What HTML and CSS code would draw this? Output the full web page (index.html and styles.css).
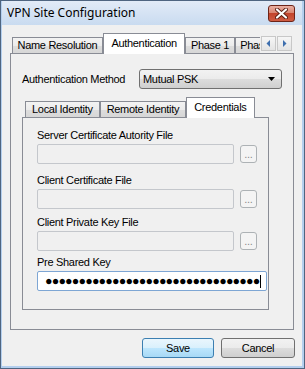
FILE: index.html
```html
<!DOCTYPE html>
<html lang="en">
<head>
  <meta charset="UTF-8" />
  <meta name="viewport" content="width=device-width, initial-scale=1.0" />
  <title>VPN Site Configuration</title>
  <link rel="stylesheet" href="styles.css">
</head>
<body>
  <div class="window">
    <!-- Title bar -->
    <div class="titlebar">
      <span class="title">VPN Site Configuration</span>
      <button class="close-btn" title="Close">
        <svg width="13" height="11" viewBox="0 0 13 11">
          <path d="M2 1.5 L11 9.5 M11 1.5 L2 9.5" stroke="#5a1d12" stroke-width="4" stroke-linecap="round" />
          <path d="M2 1.5 L11 9.5 M11 1.5 L2 9.5" stroke="#fff" stroke-width="2.2" stroke-linecap="round" />
        </svg>
      </button>
    </div>

    <div class="client">
      <!-- Outer tab control -->
      <div class="tabs outer">
        <div class="tab-strip">
          <div class="tab-list">
            <div class="tab">Name Resolution</div>
            <div class="tab active">Authentication</div>
            <div class="tab">Phase 1</div>
            <div class="tab">Phase 2</div>
          </div>
          <div class="tab-scroll">
            <span class="scroll-btn">
              <svg width="5" height="7" viewBox="0 0 5 7"><path d="M4 0 L4 7 L0.5 3.5 Z" fill="#3e6fae" /></svg>
            </span>
            <span class="scroll-btn">
              <svg width="5" height="7" viewBox="0 0 5 7"><path d="M1 0 L1 7 L4.5 3.5 Z" fill="#3e6fae" /></svg>
            </span>
          </div>
        </div>

        <div class="tab-page main-page">
          <div class="method-row">
            <label class="method-label">Authentication Method</label>
            <div class="combo">
              <span>Mutual PSK</span>
              <svg width="7" height="4" viewBox="0 0 7 4"><path d="M0 0 L7 0 L3.5 4 Z" fill="#000" /></svg>
            </div>
          </div>

          <!-- Inner tab control -->
          <div class="tabs inner">
            <div class="tab-strip">
              <div class="tab-list">
                <div class="tab">Local Identity</div>
                <div class="tab">Remote Identity</div>
                <div class="tab active">Credentials</div>
              </div>
            </div>

            <div class="tab-page creds">
              <div class="field">
                <label>Server Certificate Autority File</label>
                <div class="file-row">
                  <div class="textbox disabled"></div>
                  <button class="browse" disabled>...</button>
                </div>
              </div>
              <div class="field">
                <label>Client Certificate File</label>
                <div class="file-row">
                  <div class="textbox disabled"></div>
                  <button class="browse" disabled>...</button>
                </div>
              </div>
              <div class="field">
                <label>Client Private Key File</label>
                <div class="file-row">
                  <div class="textbox disabled"></div>
                  <button class="browse" disabled>...</button>
                </div>
              </div>
              <div class="field">
                <label>Pre Shared Key</label>
                <div class="textbox password">
                  <span class="dots">●●●●●●●●●●●●●●●●●●●●●●●●●●●●●●●●</span><span class="caret"></span>
                </div>
              </div>
            </div>
          </div>
        </div>
      </div>

      <div class="dialog-buttons">
        <button class="btn default">Save</button>
        <button class="btn cancel">Cancel</button>
      </div>
    </div>
  </div>
</body>
</html>
```

FILE: styles.css
```css
/* Base */
* {
  box-sizing: border-box;
}

body {
  margin: 0;
  background: #fff;
  font-family: "Liberation Sans", Arial, sans-serif;
  font-size: 11px;
  letter-spacing: -0.3px;
  color: #000;
}

button {
  font-family: inherit;
  font-size: inherit;
  letter-spacing: inherit;
  padding: 0;
  margin: 0;
}

/* Window frame */
.window {
  width: 305px;
  height: 369px;
  border: 1px solid #4f6580;
  background: #b4cfee;
  padding: 0 2px 2px 1px;
  display: flex;
  flex-direction: column;
}

.titlebar {
  height: 24px;
  display: flex;
  justify-content: space-between;
  align-items: flex-start;
  padding: 4px 7px 0 5px;
  background: linear-gradient(#e2ebf7, #c9dbf0);
}

.title {
  font-family: "Noto Sans", "Open Sans", sans-serif;
  font-size: 12px;
  letter-spacing: 0;
  line-height: 16px;
}

.close-btn {
  width: 27px;
  height: 17px;
  border: 1px solid #6d2418;
  border-radius: 3px;
  background: linear-gradient(#eab0a3, #d98672 45%, #c3442c 50%, #cf5c43);
  display: flex;
  align-items: center;
  justify-content: center;
}

.client {
  flex: 1;
  background: #f0f0f0;
  padding: 8px;
  display: flex;
  flex-direction: column;
}

/* Tab controls */
.tabs {
  display: flex;
  flex-direction: column;
  flex: 1;
}

.tab-strip {
  height: 20px;
  display: flex;
  align-items: flex-end;
  padding-left: 2px;
}

.tab-list {
  flex: 1;
  display: flex;
  align-items: flex-end;
  overflow: hidden;
  height: 21px;
  margin-bottom: -1px;
}

.tab {
  height: 18px;
  line-height: 16px;
  padding: 0 4.5px;
  border: 1px solid #898c95;
  border-bottom: none;
  background: linear-gradient(#f3f3f3, #ebebeb 50%, #dddddd 50%, #d6d6d6);
  white-space: nowrap;
}

.outer .tab {
  height: 17px;
  line-height: 15px;
}

.outer .tab.active,
.tab.active {
  position: relative;
  z-index: 1;
  height: 21px;
  line-height: 18px;
  padding: 0 7.5px;
  background: #fff;
}

.tab-scroll {
  display: flex;
  gap: 1px;
  margin: 0 2px 2px 1px;
}

.scroll-btn {
  width: 15px;
  height: 15px;
  border: 1px solid #c8c8c8;
  background: linear-gradient(#f6f6f6, #e4e4e4);
  display: flex;
  align-items: center;
  justify-content: center;
}

.tab-page {
  flex: 1;
  border: 1px solid #898c95;
  background: #f0f0f0;
}

.main-page {
  padding: 15px 11px 19px 11px;
  display: flex;
  flex-direction: column;
}

/* Authentication method row */
.method-row {
  display: flex;
  align-items: center;
  height: 20px;
}

.method-label {
  width: 117px;
}

.combo {
  width: 143px;
  height: 20px;
  border: 1px solid #707070;
  border-radius: 3px;
  background: linear-gradient(#f2f2f2, #ebebeb 50%, #dddddd 50%, #cfcfcf);
  display: flex;
  align-items: center;
  justify-content: space-between;
  padding: 0 6px 0 3px;
}

.inner {
  margin: 8px 13px 0 0;
}

.inner .tab-strip {
  padding-left: 3px;
}

.inner .tab {
  padding: 0 6px;
}

.inner .tab.active {
  padding: 0 7px;
}

/* Credentials page */
.creds {
  padding: 11px 11px 0 14px;
}

.field label {
  display: block;
  line-height: 13px;
  margin-bottom: 2px;
}

.field:nth-child(2) {
  margin-top: 10px;
}

.field:nth-child(3) {
  margin-top: 7px;
}

.field:nth-child(4) {
  margin-top: 5px;
}

.file-row {
  display: flex;
  align-items: center;
  gap: 6px;
}

.textbox {
  height: 20px;
  border: 1px solid #c4c7cc;
  border-radius: 2px;
  background: #f0f0f0;
}

.textbox.disabled {
  width: 206px;
}

.browse {
  width: 18px;
  height: 18px;
  border: 1px solid #adb2b5;
  border-radius: 3px;
  background: #f4f4f4;
  color: #8a8a8a;
  line-height: 12px;
}

.textbox.password {
  width: 230px;
  border-color: #7ea6d4;
  background: #fff;
  display: flex;
  align-items: center;
  padding-left: 7px;
  overflow: hidden;
}

.dots {
  font-size: 12.5px;
  letter-spacing: -0.85px;
  line-height: 12px;
  color: #000;
  white-space: nowrap;
}

.caret {
  flex: none;
  width: 1px;
  height: 13px;
  background: #000;
  margin-left: 1px;
}

/* Dialog buttons */
.dialog-buttons {
  display: flex;
  justify-content: flex-end;
  gap: 7px;
  margin: 8px -1px 0 0;
}

.btn {
  width: 72px;
  height: 20px;
  border: 1px solid #707070;
  border-radius: 3px;
  background: linear-gradient(#f2f2f2, #ebebeb 50%, #dddddd 50%, #cfcfcf);
}

.btn.cancel {
  width: 74px;
}

.btn.default {
  border-color: #3c7fb1;
  background: linear-gradient(#eaf6fd, #d9f0fc 50%, #bee6fd 50%, #a7d9f5);
}
```
